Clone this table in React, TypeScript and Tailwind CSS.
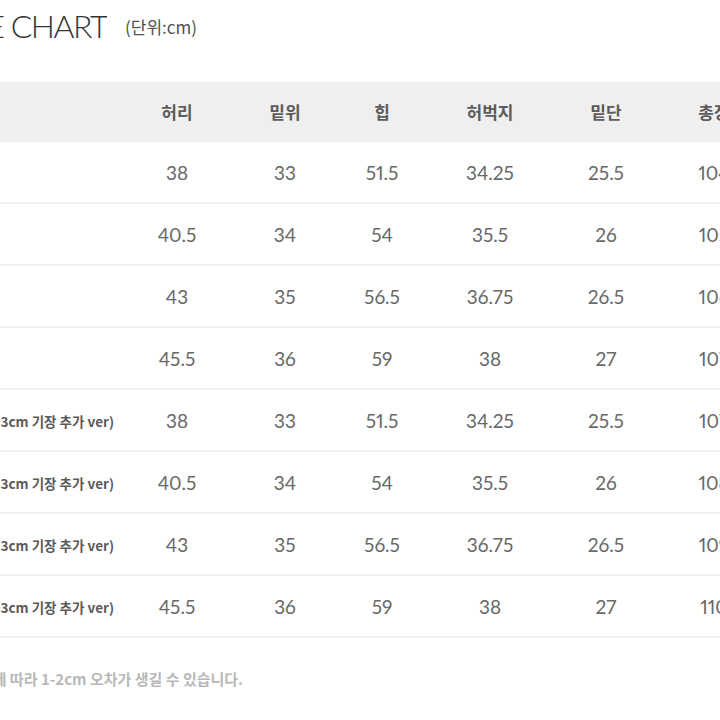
import React from "react";

const cols = "grid grid-cols-[123px_108px_108px_86px_130px_102px_114px]";

const headers = ["허리", "밑위", "힙", "허벅지", "밑단", "총장"];

const rows: { label: string; values: string[] }[] = [
  { label: "S", values: ["38", "33", "51.5", "34.25", "25.5", "104"] },
  { label: "M", values: ["40.5", "34", "54", "35.5", "26", "105"] },
  { label: "L", values: ["43", "35", "56.5", "36.75", "26.5", "106"] },
  { label: "XL", values: ["45.5", "36", "59", "38", "27", "107"] },
  { label: "S (3cm 기장 추가 ver)", values: ["38", "33", "51.5", "34.25", "25.5", "107"] },
  { label: "M (3cm 기장 추가 ver)", values: ["40.5", "34", "54", "35.5", "26", "108"] },
  { label: "L (3cm 기장 추가 ver)", values: ["43", "35", "56.5", "36.75", "26.5", "109"] },
  { label: "XL (3cm 기장 추가 ver)", values: ["45.5", "36", "59", "38", "27", "110"] },
];

const Row = ({ label, values }: { label: string; values: string[] }) => {
  return (
    <div className={`${cols} h-[62px] border-b-2 border-[#efefef] items-center`}>
      <div className="flex justify-end overflow-hidden pr-[9px] pt-[3px]">
        <span className="whitespace-nowrap text-[13.5px] font-bold text-[#5a5a5a] font-['Noto_Sans_CJK_KR',sans-serif]">
          {label.length > 2 ? label : ""}
        </span>
      </div>
      {values.map((v, i) => (
        <div key={i} className="text-center whitespace-nowrap text-[19px] text-[#686868] proportional-nums font-['Lato',sans-serif] pt-[2px]">
          {v}
        </div>
      ))}
    </div>
  );
};

export default function App() {
  return (
    <div className="w-[720px] h-[720px] overflow-hidden bg-white">
      <div className="w-[800px]">
        {/* title */}
        <div className="h-[82px] pt-[10px] flex items-baseline">
          <div className="w-[107px] flex justify-end overflow-hidden">
            <span className="whitespace-nowrap text-[32px] leading-none font-light tracking-[-1.5px] text-[#333] font-['Lato',sans-serif]">
              SIZE CHART
            </span>
          </div>
          <span className="ml-[18px] text-[17px] font-normal text-[#505050] font-['Noto_Sans_CJK_KR',sans-serif] relative top-[-4px]">
            (단위:cm)
          </span>
        </div>

        {/* header */}
        <div className={`${cols} h-[60px] bg-[#efefef] items-center`}>
          <div />
          {headers.map((h) => (
            <div key={h} className="text-center text-[17px] font-bold text-[#5c5c5c] font-['Noto_Sans_CJK_KR',sans-serif]">
              {h}
            </div>
          ))}
        </div>

        {rows.map((r) => (
          <Row key={r.label} label={r.label} values={r.values} />
        ))}

        {/* note */}
        <div className="mt-[30px] w-[243px] flex justify-end overflow-hidden">
          <span className="whitespace-nowrap text-[15px] font-bold text-[#b8b8b8] font-['Noto_Sans_CJK_KR',sans-serif]">
            ※ 측정 방법에 따라 1-2cm 오차가 생길 수 있습니다.
          </span>
        </div>
      </div>
    </div>
  );
}
